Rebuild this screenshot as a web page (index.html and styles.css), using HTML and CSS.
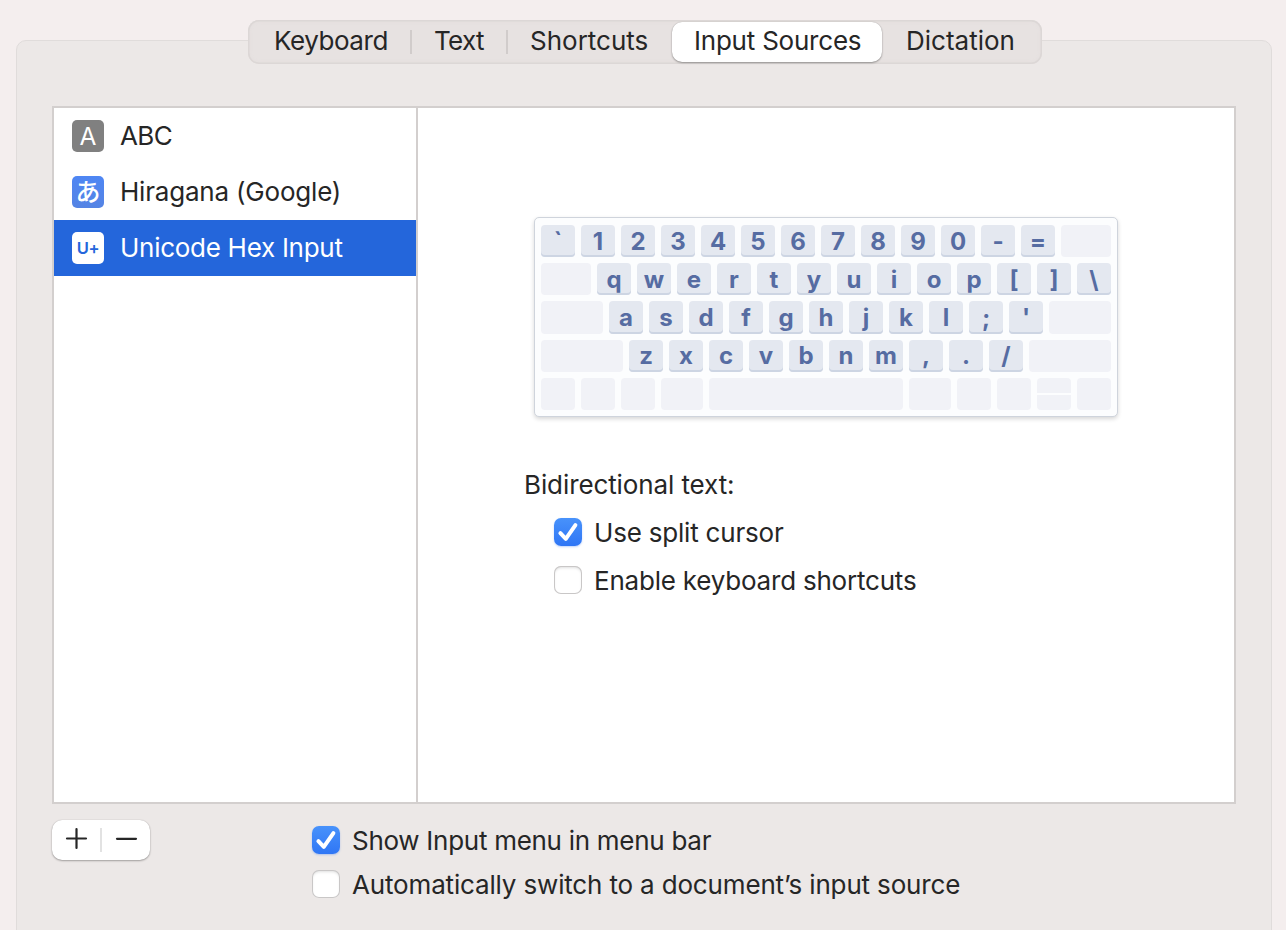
FILE: index.html
```html
<!DOCTYPE html>
<html lang="en">
<head>
<meta charset="utf-8">
<title>Keyboard – Input Sources</title>
<link rel="stylesheet" href="styles.css">
</head>
<body>
<nav class="tabs">
  <button class="tab tab-keyboard"><span>Keyboard</span></button>
  <i class="tab-sep"></i>
  <button class="tab tab-text"><span>Text</span></button>
  <i class="tab-sep"></i>
  <button class="tab tab-shortcuts"><span>Shortcuts</span></button>
  <button class="tab tab-sources selected"><span>Input Sources</span></button>
  <button class="tab tab-dictation"><span>Dictation</span></button>
</nav>
<main class="panel">
  <section class="split">
    <ul class="sources">
      <li class="source"><span class="badge badge-abc">A</span><span class="t-abc">ABC</span></li>
      <li class="source"><span class="badge badge-kana">あ</span><span class="t-hiragana">Hiragana (Google)</span></li>
      <li class="source active"><span class="badge badge-hex">U+</span><span class="t-hex">Unicode Hex Input</span></li>
    </ul>
    <div class="detail">
      <div class="keyboard">
        <div class="row"><b>`</b><b>1</b><b>2</b><b>3</b><b>4</b><b>5</b><b>6</b><b>7</b><b>8</b><b>9</b><b>0</b><b>-</b><b>=</b><i class="w50"></i></div>
        <div class="row"><i class="w50"></i><b>q</b><b>w</b><b>e</b><b>r</b><b>t</b><b>y</b><b>u</b><b>i</b><b>o</b><b>p</b><b>[</b><b>]</b><b>\</b></div>
        <div class="row home"><i class="w62"></i><b>a</b><b>s</b><b>d</b><b>f</b><b>g</b><b>h</b><b>j</b><b>k</b><b>l</b><b>;</b><b>'</b><i class="w62"></i></div>
        <div class="row lower"><i class="w82"></i><b>z</b><b>x</b><b>c</b><b>v</b><b>b</b><b>n</b><b>m</b><b>,</b><b>.</b><b>/</b><i class="w82"></i></div>
        <div class="row"><i></i><i></i><i></i><i class="w42"></i><i class="w194"></i><i class="w42"></i><i></i><i></i><i class="arrows"></i><i></i></div>
      </div>
      <div class="options">
        <p class="heading t-bidi">Bidirectional text:</p>
        <label class="check"><span class="box on"><svg viewBox="0 0 28 28"><path d="M6.4 15.2 11.8 20.8 21.4 7.2"/></svg></span><span class="t-split">Use split cursor</span></label>
        <label class="check"><span class="box"></span><span class="t-enable">Enable keyboard shortcuts</span></label>
      </div>
    </div>
  </section>
  <footer class="footer">
    <div class="stepper">
      <button><svg viewBox="0 0 24 24"><path d="M3 12.5H22M12.5 3V22"/></svg></button>
      <i></i>
      <button><svg viewBox="0 0 24 24"><path d="M3 12.8H22"/></svg></button>
    </div>
    <div class="menu-options">
      <label class="check"><span class="box on"><svg viewBox="0 0 28 28"><path d="M6.4 15.2 11.8 20.8 21.4 7.2"/></svg></span><span class="t-show">Show Input menu in menu bar</span></label>
      <label class="check"><span class="box"></span><span class="t-auto">Automatically switch to a document’s input source</span></label>
    </div>
  </footer>
</main>
</body>
</html>
```
FILE: styles.css
```css
* { box-sizing: border-box; }
html, body { height: 100%; }
body {
  margin: 0;
  padding-top: 20px;
  overflow: hidden;
  background: #f4eeee;
  color: #262626;
  font: 400 26px/32px Inter, "Noto Sans CJK JP", sans-serif;
  white-space: nowrap;
}
button { border: 0; padding: 0; background: none; font: inherit; color: inherit; letter-spacing: inherit; }

.tabs {
  position: relative;
  z-index: 1;
  display: flex;
  align-items: center;
  width: 794px;
  height: 44px;
  margin-left: 248px;
  border-radius: 11px;
  background: #e7e2e1;
  box-shadow: inset 0 0 0 1.5px #dcd7d6, inset 0 0 5px #dfdad9;
}
.tab { height: 40px; line-height: 38px; text-align: left; }
.tab span { display: block; padding-bottom: 2px; }
.tab-sep { width: 2px; height: 24px; background: #d1cccb; }
.tab-keyboard { width: 162px; padding-left: 26px; letter-spacing: -.45px; }
.tab-text { width: 94px; padding-left: 22px; letter-spacing: -.7px; }
.tab-shortcuts { width: 164px; padding-left: 22px; }
.tab-sources { width: 210px; padding-left: 22px; letter-spacing: -.22px; }
.tab-dictation { width: 158px; padding-left: 24px; }
.tab.selected {
  border-radius: 10px;
  background: #fff;
  box-shadow: 0 1px 2px rgba(0,0,0,.32), 0 0 1px rgba(0,0,0,.25);
}

.panel {
  width: 1256px;
  height: 920px;
  margin: -24px 0 0 16px;
  padding: 65px 35px 0 35px;
  border: 1px solid #e0dcdb;
  border-radius: 10px;
  background: #ece8e7;
}
.split {
  display: flex;
  width: 1184px;
  height: 698px;
  border: 2px solid #d3cfce;
  background: #fff;
}
.sources { width: 364px; margin: 0; padding: 0; list-style: none; border-right: 2px solid #d3cfce; }
.source { display: flex; align-items: center; gap: 16px; height: 56px; padding-left: 18px; }
.source.active { background: #2466db; color: #fff; }
.badge {
  width: 32px;
  height: 32px;
  border-radius: 5px;
  text-align: center;
  color: #fff;
}
.badge-abc { background: #808080; font-size: 24.5px; font-weight: 400; }
.badge-kana { background: linear-gradient(#4e86f4, #5584e4); font: 500 25px/28px "Noto Sans CJK JP", sans-serif; }
.badge-hex { background: #fff; color: #2466db; font-size: 16.5px; font-weight: 600; letter-spacing: -.3px; }

.t-abc { letter-spacing: -.6px; }
.t-hiragana { letter-spacing: -.2px; }
.t-hex { letter-spacing: -.28px; }
.t-bidi { letter-spacing: -.1px; }
.t-split { letter-spacing: -.2px; }
.t-enable { letter-spacing: -.21px; }
.t-show { letter-spacing: -.28px; }
.t-auto { letter-spacing: -.16px; }

.detail { flex: 1; padding: 109px 0 0 106px; }
.keyboard {
  display: flex;
  flex-direction: column;
  gap: 6px;
  width: 584px;
  height: 200px;
  margin-left: 10px;
  padding: 7px 6px 6px;
  border: 1px solid #cfd4dc;
  border-radius: 5px;
  background: #fcfdfe;
  box-shadow: 0 2px 4px rgba(0,0,0,.16);
}
.row { display: flex; flex: none; gap: 6px; height: 32px; line-height: 33px; }
.row.home { height: 33px; line-height: 34px; }
.row.lower { line-height: 32px; }
.row b {
  width: 34px;
  border-radius: 4px;
  background: #e4e8f0;
  box-shadow: inset 0 -2px #cdd5e3;
  color: #566ca2;
  font-size: 24px;
  font-weight: 700;
  text-align: center;
}
.row i { width: 34px; border-radius: 4px; background: #f1f2f7; }
.row .w42 { width: 42px; }
.row .w50 { width: 50px; }
.row .w62 { width: 62px; }
.row .w82 { width: 82px; }
.row .w194 { width: 194px; }
.row .arrows { background: linear-gradient(#f1f2f7 15px, #fcfdfe 15px, #fcfdfe 17px, #f1f2f7 17px); }

.options { padding-top: 52px; }
.heading { margin: 0 0 16px; }
.check { display: flex; align-items: center; gap: 12px; height: 32px; }
.options .check { margin: 0 0 16px 30px; }
.box {
  flex: none;
  width: 28px;
  height: 28px;
  margin-top: -2px;
  border-radius: 7px;
  background: #fff;
  box-shadow: inset 0 0 0 1px #c9c7c7, inset 0 2px 3px rgba(0,0,0,.13);
}
.box.on { background: linear-gradient(#4892fb, #2f76f5); box-shadow: 0 1px 2px rgba(40,110,240,.3); }
svg { display: block; fill: none; stroke-linecap: round; stroke-linejoin: round; }
.box svg { width: 28px; height: 28px; stroke: #fff; stroke-width: 4; }

.footer { display: flex; padding-top: 16px; }
.stepper {
  display: flex;
  align-items: center;
  width: 98px;
  height: 40px;
  border-radius: 10px;
  background: #fff;
  box-shadow: 0 1px 2px rgba(0,0,0,.3), 0 0 1px rgba(0,0,0,.25);
}
.stepper button { display: flex; justify-content: center; width: 48px; }
.stepper svg { width: 24px; height: 24px; margin-top: -4px; stroke: #262626; stroke-width: 2.2; }
.stepper i { width: 2px; height: 24px; background: #e2e2e2; }
.menu-options { display: flex; flex-direction: column; gap: 12px; padding: 5px 0 0 162px; }
```
